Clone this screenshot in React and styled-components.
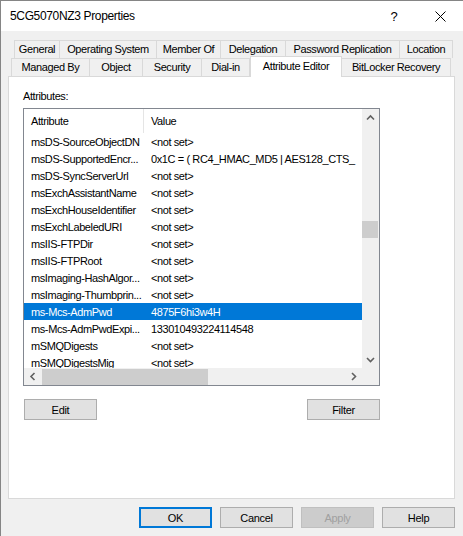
import styled, { createGlobalStyle } from 'styled-components';

const GlobalStyle = createGlobalStyle`
	html, body {
		margin: 0;
		background: #f0f0f0;
	}
	* {
		box-sizing: border-box;
	}
`;

const Window = styled.div`
	width: 463px;
	height: 536px;
	display: flex;
	flex-direction: column;
	background: #f0f0f0;
	border-left: 1px solid #858585;
	border-top: 1px solid #858585;
	font-family: 'Liberation Sans', Arial, sans-serif;
	font-size: 11px;
	letter-spacing: -0.4px;
	color: #000;
`;

const TitleBar = styled.div`
	height: 30px;
	display: flex;
	align-items: center;
	background: #fff;
	padding-left: 9px;
`;

const Title = styled.div`
	flex: 1;
	font-size: 12px;
	letter-spacing: -0.35px;
`;

const CaptionButton = styled.div`
	width: 46px;
	height: 30px;
	display: flex;
	align-items: center;
	justify-content: center;
	font-size: 13px;
	letter-spacing: 0;
`;

const Body = styled.div`
	flex: 1;
	display: flex;
	flex-direction: column;
	padding: 9px 8px 0 7px;
`;

const TabRow = styled.div`
	display: flex;
	height: 18px;
	margin-left: ${p => p.$indent}px;

	& > div:first-child {
		border-left: 1px solid #d9d9d9;
	}
`;

const Tab = styled.div`
	width: ${p => p.$w}px;
	height: 18px;
	display: flex;
	align-items: center;
	justify-content: center;
	background: #f0f0f0;
	border-top: 1px solid #d9d9d9;
	border-right: 1px solid #d9d9d9;
	white-space: nowrap;
	padding-bottom: 1px;
`;

const ActiveTab = styled(Tab)`
	height: 21px;
	margin-top: -2px;
	margin-bottom: -1px;
	background: #fff;
	border-left: 1px solid #d9d9d9;
	align-items: flex-start;
	padding-top: 3px;
	position: relative;
	z-index: 1;
`;

const Panel = styled.div`
	height: 423px;
	background: #fff;
	border: 1px solid #d9d9d9;
	padding: 13px 0 0 14px;
`;

const Label = styled.div`
	height: 13px;
	line-height: 13px;
	margin-bottom: 5px;
`;

const ListView = styled.div`
	width: 357px;
	height: 278px;
	border: 1px solid #828790;
	display: grid;
	grid-template-columns: 1fr 17px;
	grid-template-rows: 1fr 17px;
	background: #fff;
`;

const ListContent = styled.div`
	overflow: hidden;
	min-width: 0;
`;

const Header = styled.div`
	height: 24px;
	display: grid;
	grid-template-columns: 120px 1fr;
	align-items: center;
`;

const HeaderCell = styled.div`
	padding-left: 7px;
	height: 100%;
	display: flex;
	align-items: center;
	border-right: ${p => (p.$divider ? '1px solid #e5e5e5' : 'none')};
`;

const Row = styled.div`
	height: 17px;
	display: grid;
	grid-template-columns: 120px 1fr;
	align-items: center;
	white-space: nowrap;
	background: ${p => (p.$selected ? '#0078d7' : 'transparent')};
	color: ${p => (p.$selected ? '#fff' : '#000')};
`;

const Cell = styled.div`
	padding-left: 7px;
	overflow: hidden;
`;

const VScroll = styled.div`
	background: #f0f0f0;
	display: flex;
	flex-direction: column;
`;

const HScroll = styled.div`
	background: #f0f0f0;
	display: flex;
	align-items: center;
`;

const Corner = styled.div`
	background: #f0f0f0;
`;

const Arrow = styled.svg`
	width: 17px;
	height: 17px;
	flex: none;
	display: block;
`;

const VThumb = styled.div`
	width: 16px;
	height: 17px;
	margin-top: ${p => p.$offset}px;
	background: #cdcdcd;
`;

const HThumb = styled.div`
	width: ${p => p.$size}px;
	height: 16px;
	margin-left: 1px;
	background: #cdcdcd;
`;

const Spacer = styled.div`
	flex: 1;
`;

const ButtonRow = styled.div`
	width: 357px;
	display: flex;
	justify-content: space-between;
	padding-left: 1px;
	margin-top: 13px;
`;

const Button = styled.div`
	width: 73px;
	height: 21px;
	display: flex;
	align-items: center;
	justify-content: center;
	background: ${p => (p.$disabled ? '#cccccc' : '#e1e1e1')};
	color: ${p => (p.$disabled ? '#a0a0a0' : '#000')};
	border: ${p =>
		p.$default ? '2px solid #0078d7' : `1px solid ${p.$disabled ? '#bfbfbf' : '#adadad'}`};
	letter-spacing: -0.3px;
`;

const Footer = styled.div`
	display: flex;
	justify-content: flex-end;
	gap: 8px;
	margin-top: 8px;
`;

const rows = [
	['msDS-SourceObjectDN', '<not set>'],
	['msDS-SupportedEncr...', '0x1C = ( RC4_HMAC_MD5 | AES128_CTS_'],
	['msDS-SyncServerUrl', '<not set>'],
	['msExchAssistantName', '<not set>'],
	['msExchHouseIdentifier', '<not set>'],
	['msExchLabeledURI', '<not set>'],
	['msIIS-FTPDir', '<not set>'],
	['msIIS-FTPRoot', '<not set>'],
	['msImaging-HashAlgor...', '<not set>'],
	['msImaging-Thumbprin...', '<not set>'],
	['ms-Mcs-AdmPwd', '4875F6hi3w4H'],
	['ms-Mcs-AdmPwdExpi...', '133010493224114548'],
	['mSMQDigests', '<not set>'],
	['mSMQDigestsMig', '<not set>'],
];

function Chevron({ points }) {
	return (
		<Arrow viewBox="0 0 17 17">
			<polyline points={points} fill="none" stroke="#606060" strokeWidth="1.6" />
		</Arrow>
	);
}

export default function App() {
	return (
		<>
			<GlobalStyle />
			<Window>
				<TitleBar>
					<Title>5CG5070NZ3 Properties</Title>
					<CaptionButton>?</CaptionButton>
					<CaptionButton>
						<svg width="11" height="11" viewBox="0 0 11 11">
							<path d="M0.5 0.5 L10.5 10.5 M10.5 0.5 L0.5 10.5" stroke="#000" strokeWidth="1" />
						</svg>
					</CaptionButton>
				</TitleBar>
				<Body>
					<TabRow $indent={6}>
						<Tab $w={46}>General</Tab>
						<Tab $w={97}>Operating System</Tab>
						<Tab $w={64}>Member Of</Tab>
						<Tab $w={65}>Delegation</Tab>
						<Tab $w={114}>Password Replication</Tab>
						<Tab $w={53}>Location</Tab>
					</TabRow>
					<TabRow $indent={3}>
						<Tab $w={79}>Managed By</Tab>
						<Tab $w={53}>Object</Tab>
						<Tab $w={59}>Security</Tab>
						<Tab $w={48}>Dial-in</Tab>
						<ActiveTab $w={92}>Attribute Editor</ActiveTab>
						<Tab $w={109}>BitLocker Recovery</Tab>
					</TabRow>
					<Panel>
						<Label>Attributes:</Label>
						<ListView>
							<ListContent>
								<Header>
									<HeaderCell $divider>Attribute</HeaderCell>
									<HeaderCell>Value</HeaderCell>
								</Header>
								{rows.map(([name, value]) => (
									<Row key={name} $selected={name === 'ms-Mcs-AdmPwd'}>
										<Cell>{name}</Cell>
										<Cell>{value}</Cell>
									</Row>
								))}
							</ListContent>
							<VScroll>
								<Chevron points="5,10.5 8.5,7 12,10.5" />
								<VThumb $offset={95} />
								<Spacer />
								<Chevron points="5,7 8.5,10.5 12,7" />
							</VScroll>
							<HScroll>
								<Chevron points="10.5,5 7,8.5 10.5,12" />
								<HThumb $size={166} />
								<Spacer />
								<Chevron points="7,5 10.5,8.5 7,12" />
							</HScroll>
							<Corner />
						</ListView>
						<ButtonRow>
							<Button>Edit</Button>
							<Button>Filter</Button>
						</ButtonRow>
					</Panel>
					<Footer>
						<Button $default>OK</Button>
						<Button>Cancel</Button>
						<Button $disabled>Apply</Button>
						<Button>Help</Button>
					</Footer>
				</Body>
			</Window>
		</>
	);
}
